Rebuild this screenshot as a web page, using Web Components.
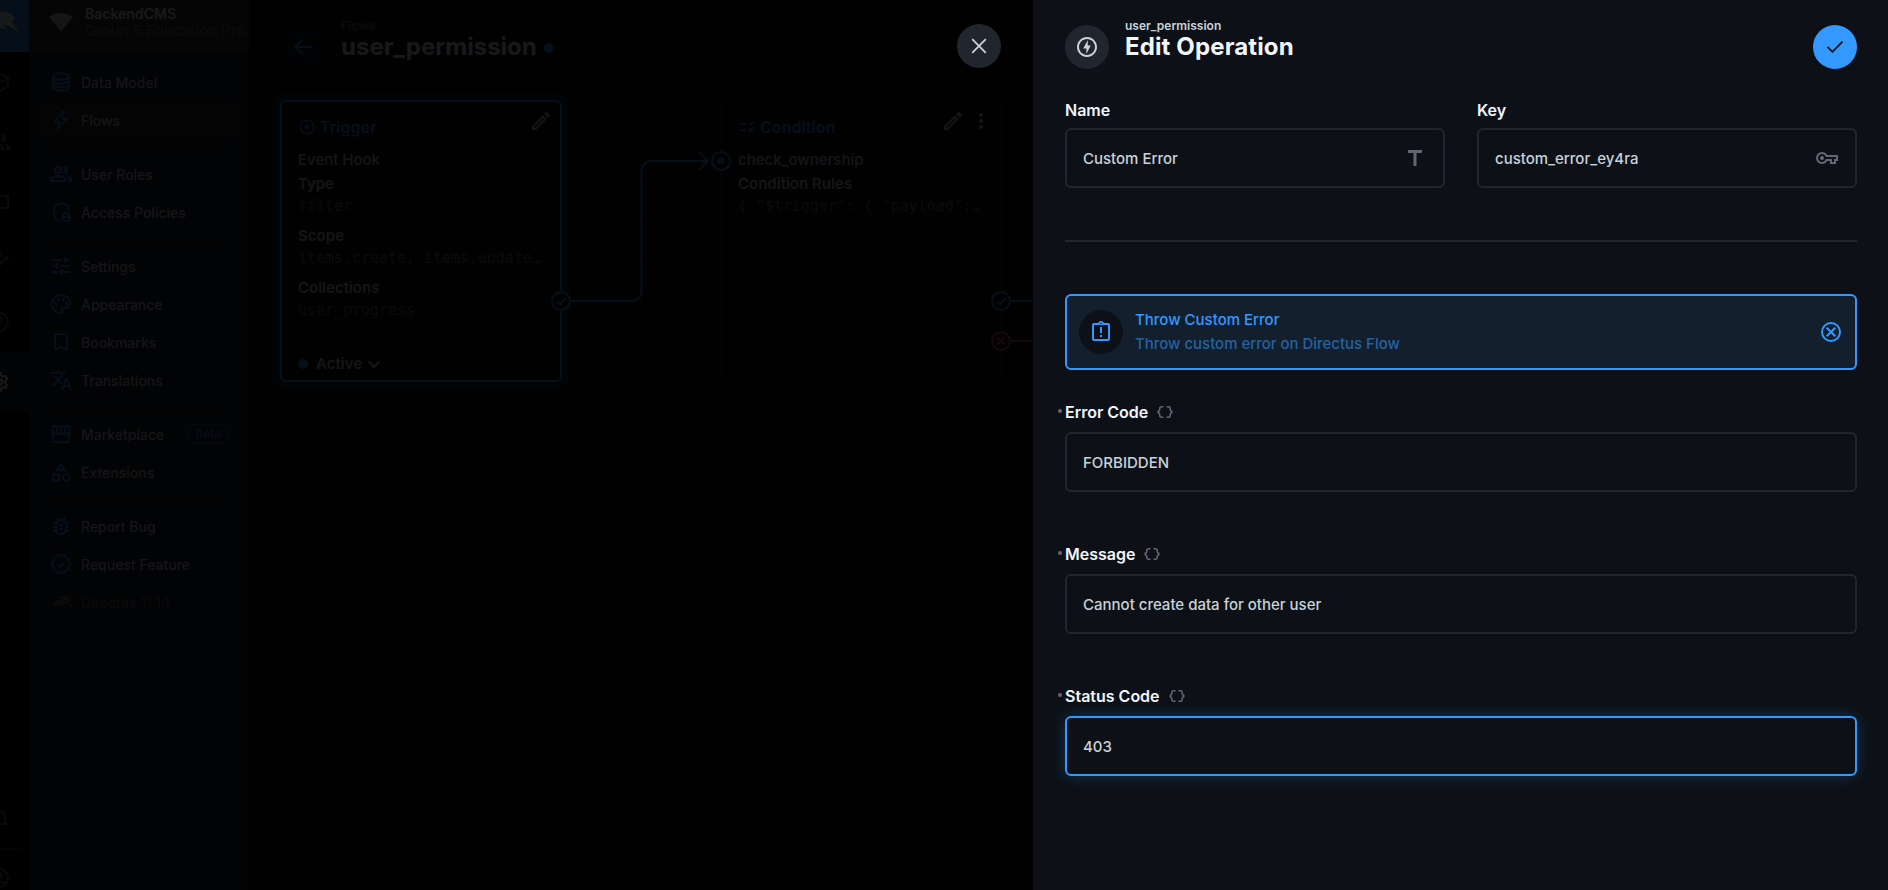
<!DOCTYPE html>
<html lang="en">
<head>
<meta charset="utf-8">
<title>Edit Operation</title>
<style>
html,body{margin:0;height:100%;overflow:hidden;background:#0d1117}
body{font-family:Inter,sans-serif;
--bg:#0d1117;--line:#21262e;--fg:#c9d1d9;--accent:#f0f6fc;--muted:#666672;--primary:#3399ff;--danger:#e35169;
color:var(--fg);font-size:15px;font-weight:500;line-height:24px}
</style>
</head>
<body>
<cms-app></cms-app>
<script>
const P = d => `<path d="${d}"/>`;
const S = (d, w = 2) => `<path d="${d}" fill="none" stroke="currentColor" stroke-width="${w}"/>`;
const HARE = P('M0 18.500c2.500-.5 3.500-2 4-4 .7-3 3-4.800 6.500-4.500l3 .6C12.800 9 11.500 8 10 7.500c1.800-2 4.800-2.600 7.500-1.500 2.300.9 4 2.200 4.300 3.800.1 1-1 1.500-2.300 1.700 1.500 1.500 2.700 3 4.300 5.500l-.8.9-4.800-3.600-3.500-.4c.5 1.400 1.500 1.600 2.300 2.200-2.600.6-4.600-.3-5.800-1.500-2.100.9-3.900.6-5.500.1-1.300 1.700-3 1.600-4 2.400z');
const ICONS = {
  hare: HARE,
  fan: P('M12 21.500 24 7C22 5.300 17.800 3 12 3S2 5.300 0 7z'),
  database: `<ellipse cx="12" cy="6.500" rx="8" ry="3.200" fill="none" stroke="currentColor" stroke-width="2"/>` + S('M4 6.500v11c0 1.800 3.600 3.200 8 3.200s8-1.400 8-3.200v-11M4 10.200c0 1.800 3.600 3.200 8 3.200s8-1.400 8-3.200M4 14c0 1.800 3.600 3.200 8 3.200s8-1.400 8-3.200'),
  bolt: S('M13.800 3.500 5.500 14H10l-1.200 7 9-10.600h-4.300l1.300-6.900z', 1.8),
  group: P('M16.670 13.130C18.040 14.060 19 15.320 19 17v3h4v-3c0-2.180-3.570-3.470-6.330-3.870zM15 12c2.210 0 4-1.790 4-4s-1.790-4-4-4c-.47 0-.91.1-1.330.24C14.500 5.270 15 6.580 15 8s-.5 2.730-1.330 3.760c.42.14.86.24 1.330.24zM9 12c2.210 0 4-1.790 4-4s-1.790-4-4-4-4 1.790-4 4 1.790 4 4 4zm0-6c1.100 0 2 .9 2 2s-.9 2-2 2-2-.9-2-2 .9-2 2-2zm0 7c-2.670 0-8 1.340-8 4v3h16v-3c0-2.660-5.330-4-8-4zm6 5H3v-.99C3.200 16.290 6.300 15 9 15s5.800 1.290 6 2v1z'),
  admin: S('M11.500 21C7.500 19.800 5 15.800 5 11.200V5.600L12 3l7 2.600v5') + `<path fill-rule="evenodd" d="M17 12a5 5 0 1 0 0 10 5 5 0 0 0 0-10zm0 1.700a1.500 1.500 0 1 1 0 3 1.500 1.500 0 0 1 0-3zm0 6.500c-1.100 0-2-.5-2.600-1.300.4-.8 1.700-1.200 2.600-1.200s2.200.4 2.600 1.200c-.6.8-1.500 1.300-2.600 1.300z"/>`,
  tune: P('M3 17v2h6v-2H3zM3 5v2h10V5H3zm10 16v-2h8v-2h-8v-2h-2v6h2zM7 9v2H3v2h4v2h2V9H7zm14 4v-2H11v2h10zm-6-4h2V7h4V5h-4V3h-2v6z'),
  palette: P('M12 22C6.490 22 2 17.510 2 12S6.490 2 12 2s10 4.040 10 9c0 3.310-2.690 6-6 6h-1.770c-.28 0-.5.22-.5.5 0 .12.05.23.13.33.41.47.64 1.060.64 1.670A2.500 2.500 0 0 1 12 22zm0-18c-4.410 0-8 3.590-8 8s3.590 8 8 8c.28 0 .5-.22.5-.5a.54.54 0 0 0-.14-.35c-.41-.46-.63-1.050-.63-1.650a2.500 2.500 0 0 1 2.500-2.500H16c2.210 0 4-1.790 4-4 0-3.860-3.590-7-8-7z') + '<circle cx="6.500" cy="11.500" r="1.500"/><circle cx="9.500" cy="7.500" r="1.500"/><circle cx="14.500" cy="7.500" r="1.500"/><circle cx="17.500" cy="11.500" r="1.500"/>',
  bookmark: P('M17 3H7c-1.100 0-2 .9-2 2v16l7-3 7 3V5c0-1.100-.9-2-2-2zm0 15-5-2.180L7 18V5h10v13z'),
  translate: P('M12.870 15.070l-2.540-2.510.03-.03c1.740-1.940 2.980-4.170 3.710-6.530H17V4h-7V2H8v2H1v1.990h11.170C11.500 7.920 10.440 9.750 9 11.350 8.070 10.320 7.300 9.190 6.690 8h-2c.73 1.630 1.730 3.170 2.980 4.560l-5.090 5.020L4 19l5-5 3.110 3.110.76-2.040zM18.500 10h-2L12 22h2l1.120-3h4.750L21 22h2l-4.500-12zm-2.620 7l1.620-4.330L19.120 17h-3.240z'),
  store: S('M4 11v9h16v-9M4.300 4h15.400l1.300 5.500c0 1.700-1 2.500-2.300 2.500S16.400 11 16.400 9.500c0 1.500-.9 2.500-2.200 2.500S12 11 12 9.500C12 11 11.100 12 9.800 12S7.600 11 7.600 9.500C7.600 11 6.600 12 5.300 12S3 11.200 3 9.500zM7.600 9.500 8 4M12 9.500V4M16.400 9.500 16 4'),
  category: P('M12 2l-5.500 9h11L12 2zm0 3.840L13.930 9h-3.870L12 5.840zM17.500 13a4.500 4.500 0 1 0 0 9 4.500 4.500 0 0 0 0-9zm0 7a2.500 2.500 0 0 1 0-5 2.500 2.500 0 0 1 0 5zM3 21.500h8v-8H3v8zm2-6h4v4H5v-4z'),
  bug: P('M20 8h-2.810c-.45-.78-1.070-1.450-1.820-1.960L17 4.410 15.590 3l-2.170 2.170C12.960 5.060 12.490 5 12 5s-.96.06-1.410.17L8.410 3 7 4.410l1.620 1.630C7.880 6.550 7.260 7.220 6.810 8H4v2h2.090c-.05.33-.09.66-.09 1v1H4v2h2v1c0 .34.04.67.09 1H4v2h2.810c1.040 1.790 2.970 3 5.190 3s4.150-1.210 5.190-3H20v-2h-2.090c.05-.33.09-.66.09-1v-1h2v-2h-2v-1c0-.34-.04-.67-.09-1H20V8zm-4 7c0 2.210-1.790 4-4 4s-4-1.790-4-4v-4c0-2.210 1.790-4 4-4s4 1.790 4 4v4zm-6-1h4v2h-4v-2zm0-4h4v2h-4v-2z'),
  verified: S('M21.700 12l-2.200-2.500.3-3.300-3.200-.7-1.700-2.800L12 4 9.100 2.700 7.400 5.500l-3.200.7.3 3.300L2.300 12l2.200 2.500-.3 3.300 3.200.7 1.700 2.800L12 20l2.900 1.300 1.700-2.800 3.200-.7-.3-3.300z', 1.9) + S('m8.200 12.200 2.700 2.700 5-5'),
  edit: P('M14.060 9.020l.92.92L5.920 19H5v-.92l9.060-9.060M17.660 3c-.25 0-.51.1-.7.29l-1.830 1.830 3.750 3.750 1.830-1.830c.39-.39.39-1.020 0-1.410l-2.340-2.340c-.2-.2-.45-.29-.71-.29zm-3.600 3.190L3 17.250V21h3.750L17.810 9.940l-3.750-3.750z'),
  more: '<circle cx="12" cy="6" r="2"/><circle cx="12" cy="12" r="2"/><circle cx="12" cy="18" r="2"/>',
  offline: P('M12 2.020c-5.510 0-9.980 4.470-9.980 9.980s4.470 9.980 9.980 9.980 9.980-4.470 9.980-9.980S17.510 2.020 12 2.020zm0 17.960c-4.400 0-7.980-3.580-7.980-7.980S7.600 4.020 12 4.020 19.980 7.600 19.980 12 16.400 19.980 12 19.980zM12.750 5l-4.500 8.500h3.140V19l4.360-8.500h-3z'),
  rule: P('M16.540 11 13 7.460l1.410-1.410 2.120 2.120 4.240-4.240 1.410 1.410L16.540 11zM11 7H2v2h9V7zm10 6.410L19.590 12 17 14.590 14.410 12 13 13.410 15.590 16 13 18.590 14.410 20 17 17.410 19.590 20 21 18.590 18.410 16 21 13.410zM11 15H2v2h9v-2z'),
  key: P('M7 14q-.825 0-1.412-.588T5 12t.588-1.412T7 10t1.413.588T9 12t-.587 1.413T7 14m0 4q-2.500 0-4.250-1.750T1 12t1.750-4.250T7 6q1.675 0 3.038.825T12.200 9H23v6h-2v3h-6v-3h-2.800q-.8 1.350-2.162 2.175T7 18m0-2q1.650 0 2.650-1.012T10.850 13H17v3h2v-3h2v-2H10.850q-.2-.975-1.200-1.988T7 8T4.175 9.175T3 12t1.175 2.825T7 16'),
  title: P('M5 4v3h5.500v13h3V7H19V4z'),
  late: `<path fill-rule="evenodd" d="M19 3h-4.180C14.400 1.840 13.300 1 12 1s-2.400.84-2.820 2H5c-1.100 0-2 .9-2 2v14c0 1.100.9 2 2 2h14c1.100 0 2-.9 2-2V5c0-1.100-.9-2-2-2zm0 16H5V5h14v14zM12 2.700a.8.8 0 1 0 0 1.600.8.8 0 0 0 0-1.600z"/>` + P('M11 15h2v2h-2zM11 7h2v6h-2z'),
  cancel: '<circle cx="12" cy="12" r="9" fill="none" stroke="currentColor" stroke-width="2"/>' + S('m7.700 7.700 8.600 8.600M16.300 7.700l-8.600 8.600'),
  object: P('M4 7v2c0 .55-.45 1-1 1H2v4h1c.55 0 1 .45 1 1v2c0 1.650 1.350 3 3 3h3v-2H7c-.55 0-1-.45-1-1v-2c0-1.300-.84-2.420-2-2.830v-.34C5.160 11.420 6 10.300 6 9V7c0-.55.45-1 1-1h3V4H7C5.350 4 4 5.350 4 7zm17 3c-.55 0-1-.45-1-1V7c0-1.650-1.350-3-3-3h-3v2h3c.55 0 1 .45 1 1v2c0 1.300.84 2.420 2 2.830v.34c-1.160.41-2 1.520-2 2.830v2c0 .55-.45 1-1 1h-3v2h3c1.650 0 3-1.350 3-3v-2c0-.55.45-1 1-1h1v-4h-1z'),
  check: S('m4.500 11.800 5 5L19.500 6.600', 1.7),
  close: S('m5.200 5.200 13.600 13.600M18.800 5.200 5.200 18.800', 1.8),
  back: S('M20 12H4.600M12 4.300 4.400 12l7.600 7.700', 1.9),
  chevron: S('m6 9 6 6 6-6', 2.6),
  cube: S('m12 3 9 5v8.500l-9 5-9-5V8zM3 8l9 5 9-5M12 13v8'),
  folder: S('M3 6h18v12H3z'),
  insights: S('m2 18 6-7 4 4 8-8') + '<circle cx="12" cy="15" r="2"/><circle cx="20" cy="8" r="2"/><circle cx="13" cy="5" r="1.500"/>',
  help: '<circle cx="12" cy="12" r="9" fill="none" stroke="currentColor" stroke-width="2"/>' + S('M9 10a3 3 0 1 1 4.700 2.500c-1.200.8-1.700 1.300-1.700 2.500M12 16.500v2'),
  gear: '<circle cx="12" cy="12" r="3" fill="none" stroke="currentColor" stroke-width="2"/>' + S('M10.200 3h3.600l.4 2.700 1.700 1 2.500-1 1.800 3.100-2.100 1.700v2.900l2.100 1.800-1.800 3.100-2.500-1-1.700 1-.4 2.700h-3.600l-.4-2.700-1.700-1-2.500 1-1.800-3.100 2.100-1.700v-3L3.800 8.800l1.800-3.100 2.500 1 1.700-1z'),
  bell: S('M4 18h16M6 18v-7a6 6 0 0 1 12 0v7') + P('M10 20h4a2 2 0 0 1-4 0zM10.500 3.500h3V6h-3z'),
  account: '<circle cx="12" cy="12" r="9" fill="none" stroke="currentColor" stroke-width="2"/><circle cx="12" cy="9.500" r="2.600" fill="none" stroke="currentColor" stroke-width="2"/>' + S('M5.500 18.500c1.800-1.700 4-2.500 6.500-2.500s4.700.8 6.500 2.500')
};

function define(name, render) {
  customElements.define(name, class extends HTMLElement {
    constructor() { super(); this.attachShadow({ mode: 'open' }); }
    connectedCallback() {
      const t = document.createElement('template');
      t.innerHTML = render(this);
      this.shadowRoot.replaceChildren(t.content.cloneNode(true));
    }
  });
}
const at = (el, n, d = '') => el.getAttribute(n) ?? d;

define('m-icon', el => `<style>
:host{display:block;flex:none;width:${at(el, 'size', 24)}px;height:${at(el, 'size', 24)}px}
svg{display:block;width:100%;height:100%;overflow:visible}</style>
<svg viewBox="0 0 24 24" fill="currentColor">${ICONS[at(el, 'name')]}</svg>`);

define('round-button', () => `<style>
:host{display:flex;flex:none;width:44px;height:44px;border-radius:50%;align-items:center;justify-content:center;background:var(--button-bg,#21262e)}
</style><slot></slot>`);

define('module-rail', () => `<style>
:host{display:flex;flex:none;flex-direction:column;width:60px;height:100%;background:#000;color:#65656d}
div{display:flex;align-items:center;justify-content:center;height:60px;flex:none}
.logo{color:#fff;background:#2a96ff}
.on{background:#1a212e;color:#f0f6fc}
.gap{flex:1}
hr{width:44px;margin:0 8px -2px;box-sizing:border-box;border:0;height:2px;background:#21262e}
</style>
<div class="logo"><m-icon name="hare" size="38"></m-icon></div>
<div><m-icon name="cube"></m-icon></div>
<div><m-icon name="group"></m-icon></div>
<div><m-icon name="folder"></m-icon></div>
<div><m-icon name="insights"></m-icon></div>
<div><m-icon name="help"></m-icon></div>
<div class="on"><m-icon name="gear"></m-icon></div>
<span class="gap"></span>
<div><m-icon name="bell"></m-icon></div>
<hr>
<div><m-icon name="account"></m-icon></div>`);

define('nav-item', el => `<style>
:host{display:flex;align-items:center;gap:8px;height:36px;margin-bottom:2px;padding:0 8px;border-radius:6px;font-size:14px;color:var(--fg)}
:host([active]){background:#2c2c2c}
:host([muted]){color:#606069}
m-icon{color:var(--primary)}
:host([muted]) m-icon{color:#65656d}
span{flex:1;padding-top:1px}
</style><m-icon name="${at(el, 'icon')}"></m-icon><span><slot></slot></span><slot name="badge"></slot>`);

define('nav-divider', () => `<style>:host{display:flex;align-items:center;height:16px;padding:0 8px}
i{flex:1;height:2px;background:#21262e}</style><i></i>`);

define('side-nav', () => `<style>
:host{display:flex;flex:none;flex-direction:column;width:220px;height:100%;background:#1a212e}
header{display:flex;align-items:center;gap:12px;height:60px;padding:0 0 0 20px;background:#323232;box-sizing:border-box}
header div{min-width:0;font-size:14px;line-height:17px}
b{display:block;font-weight:600;color:var(--accent)}
p{margin:0;white-space:nowrap;font-size:15px;letter-spacing:-.05px;color:#666672}
nav{padding:12px 11px 0 12px}
em{font-style:normal;font-size:12px;line-height:16px;padding:0 6px;margin-right:1px;border:2px solid #1a4a80;border-radius:6px;color:#3080e0}
</style>
<header><m-icon name="fan"></m-icon><div><b>BackendCMS</b><p>Group 5 Education Pro…</p></div></header>
<nav>
<nav-item icon="database">Data Model</nav-item>
<nav-item icon="bolt" active>Flows</nav-item>
<nav-divider></nav-divider>
<nav-item icon="group">User Roles</nav-item>
<nav-item icon="admin">Access Policies</nav-item>
<nav-divider></nav-divider>
<nav-item icon="tune">Settings</nav-item>
<nav-item icon="palette">Appearance</nav-item>
<nav-item icon="bookmark">Bookmarks</nav-item>
<nav-item icon="translate">Translations</nav-item>
<nav-divider></nav-divider>
<nav-item icon="store">Marketplace<em slot="badge">Beta</em></nav-item>
<nav-item icon="category">Extensions</nav-item>
<nav-divider></nav-divider>
<nav-item icon="bug">Report Bug</nav-item>
<nav-item icon="verified">Request Feature</nav-item>
<nav-item icon="hare" muted>Directus 11.1.1</nav-item>
</nav>`);

define('page-title', el => `<style>
:host{display:flex;align-items:flex-start;gap:16px}
div{margin-top:-6px}
small{display:block;font-size:12px;line-height:14px;font-weight:600;color:var(--small,var(--fg))}
h1{margin:0;font-size:24px;line-height:28px;font-weight:700;letter-spacing:var(--title-spacing,.13px);color:var(--accent);display:flex;align-items:center;gap:7px}
</style><slot name="icon"></slot><div><small>${at(el, 'parent')}</small><h1><slot></slot></h1></div>`);

define('flow-panel', el => `<style>
:host{position:absolute;box-sizing:border-box;width:282px;height:282px;border:2px solid #21262e;border-radius:6px;background:var(--bg);padding:13px 16px 0;display:flex;flex-direction:column}
:host([trigger]){border-color:var(--primary);box-shadow:0 0 0 7px #0d2a48}
header{display:flex;height:24px;align-items:flex-start;color:var(--primary);margin-right:-9px;margin-bottom:9px}
header m-icon[size]{margin:3px 4px 0 0}
h2{flex:1;margin:0;font-size:16px;line-height:24px;font-weight:600;letter-spacing:.05px}
nav{display:flex;gap:4px;margin-top:-6px;color:#c9d1d9}
</style>
<header><m-icon name="${at(el, 'icon')}" size="18"></m-icon><h2>${at(el, 'heading')}</h2>
<nav><m-icon name="edit"></m-icon>${el.hasAttribute('trigger') ? '' : '<m-icon name="more"></m-icon>'}</nav></header>
<slot></slot>`);

define('flow-field', el => `<style>
:host{display:block;margin-bottom:8px}
b{display:block;font-weight:600;line-height:24px}
code{display:block;font:15px/20px "DejaVu Sans Mono",monospace;letter-spacing:-.04px;color:#666672;white-space:nowrap;overflow:hidden;text-overflow:ellipsis}
</style><b>${at(el, 'label')}</b><code><slot></slot></code>`);

define('flow-status', () => `<style>
:host{display:flex;align-items:center;gap:8px;height:36px;margin:auto -10px 0;padding:2px 10px 0;box-sizing:border-box;border-top:2px solid #171b21;font-weight:600}
i{width:10px;height:10px;border-radius:50%;background:var(--primary)}
m-icon{margin-left:-7px}
</style><i></i><slot></slot><m-icon name="chevron" size="22"></m-icon>`);

define('flow-canvas', () => `<style>
:host{display:block;position:relative;flex:1;background:radial-gradient(circle at 1px 1px,#2a3038 1px,transparent 1.300px) 0 0/20px 20px}
svg{position:absolute;left:0;top:0;width:760px;height:300px;overflow:visible}
</style>
<flow-panel trigger icon="offline" heading="Trigger" style="left:0;top:0"><span>Event Hook</span>
<flow-field label="Type">filter</flow-field>
<flow-field label="Scope">items.create, items.update, items.delete</flow-field>
<flow-field label="Collections">user_progress</flow-field>
<flow-status>Active</flow-status></flow-panel>
<flow-panel icon="rule" heading="Condition" style="left:440px;top:0"><span>check_ownership</span>
<flow-field label="Condition Rules">{ "$trigger": { "payload": { "user": true } } }</flow-field></flow-panel>
<svg fill="none" stroke="#3399ff" stroke-width="2">
<path d="M291 201h60.500a10 10 0 0 0 10-10V71a10 10 0 0 1 10-10h56M419 52l9 9-9 9"/>
<circle cx="281" cy="201" r="9" fill="#0d1117"/><path d="m276.500 201 3.500 3.500 6-6"/>
<circle cx="441" cy="61" r="9" fill="#0d1117"/><circle cx="441" cy="61" r="3.300" fill="#3399ff" stroke="none"/>
<circle cx="721" cy="201" r="9" fill="#0d1117"/><path d="m716.500 201 3.500 3.500 6-6M731 201h40"/>
<g stroke="#e35169"><circle cx="721" cy="241" r="9" fill="#0d1117"/><path d="m717 237 8 8m0-8-8 8M731 241h40"/></g>
</svg>`);

define('flow-page', () => `<style>
:host{display:flex;flex:1;flex-direction:column;padding:33px 0 0 31px;min-width:0;background:var(--bg)}
page-title{height:44px;margin-bottom:31px;--small:#666672;--title-spacing:.02px}
round-button{--button-bg:#121b2a;color:var(--primary);margin-left:1px}
i{width:10px;height:10px;border-radius:50%;background:var(--primary);margin-top:1px}
</style>
<page-title parent="Flows"><round-button slot="icon"><m-icon name="back" size="24"></m-icon></round-button><span>user_permission</span><i></i></page-title>
<flow-canvas></flow-canvas>`);

define('form-field', el => `<style>
:host{display:block}
label{display:flex;align-items:center;height:24px;margin-bottom:${el.hasAttribute('required') ? 8 : 6}px;font-size:16px;font-weight:600;color:var(--accent)}
label i{width:4px;height:4px;border-radius:50%;background:var(--muted);margin:-3px 3px 0 -7px}
label m-icon{margin-left:8px;color:var(--muted)}
div{display:flex;align-items:center;box-sizing:border-box;height:60px;padding:0 16px;border:2px solid var(--line);border-radius:6px;color:var(--fg)}
:host([focused]) div{border-color:var(--primary);box-shadow:0 0 16px -2px #3399ff55}
span{flex:1;padding-top:2px}
div m-icon{color:var(--muted)}
</style>
<label>${el.hasAttribute('required') ? '<i></i>' : ''}${at(el, 'label')}${el.hasAttribute('required') ? '<m-icon name="object" size="18"></m-icon>' : ''}</label>
<div><span><slot></slot></span>${at(el, 'icon') ? `<m-icon name="${at(el, 'icon')}"></m-icon>` : ''}</div>`);

define('operation-card', () => `<style>
:host{display:flex;align-items:center;gap:12px;box-sizing:border-box;height:76px;padding:0 12px;border:2px solid var(--primary);border-radius:6px;background:#131f2d;color:var(--primary)}
round-button{--button-bg:#0d1117}
div{flex:1}
p{margin:0;color:#2562a0;letter-spacing:-.02px}
</style><round-button><m-icon name="late"></m-icon></round-button>
<div><slot></slot><p><slot name="description"></slot></p></div><m-icon name="cancel"></m-icon>`);

define('side-drawer', () => `<style>
:host{display:block;position:absolute;left:1033px;top:0;bottom:0;width:856px;box-sizing:border-box;padding:25px 32px 0;background:var(--bg)}
.close{position:absolute;left:-76px;top:24px}
header{display:flex;justify-content:space-between;height:44px;margin-bottom:29px}
.save{--button-bg:#3399ff;color:#0d1117}
.pair{display:grid;grid-template-columns:1fr 1fr;gap:32px}
hr{height:2px;border:0;margin:52px 0;background:var(--line)}
.fields{display:grid;gap:50px;margin-top:30px}
</style>
<round-button class="close"><m-icon name="close"></m-icon></round-button>
<header><page-title parent="user_permission"><round-button slot="icon"><m-icon name="offline"></m-icon></round-button>Edit Operation</page-title>
<round-button class="save"><m-icon name="check"></m-icon></round-button></header>
<div class="pair"><form-field label="Name" icon="title">Custom Error</form-field><form-field label="Key" icon="key">custom_error_ey4ra</form-field></div>
<hr>
<operation-card>Throw Custom Error<span slot="description">Throw custom error on Directus Flow</span></operation-card>
<div class="fields">
<form-field required label="Error Code">FORBIDDEN</form-field>
<form-field required label="Message">Cannot create data for other user</form-field>
<form-field required focused label="Status Code">403</form-field>
</div>`);

define('cms-app', () => `<style>
:host{display:block;position:relative;height:100vh;overflow:hidden}
main{display:flex;height:calc(100% + 26px);margin:-8px 0 0 -31px}
.overlay{position:absolute;inset:0;background:rgba(0,0,0,.9)}
</style>
<main><module-rail></module-rail><side-nav></side-nav><flow-page></flow-page></main>
<div class="overlay"></div>
<side-drawer></side-drawer>`);
</script>
</body>
</html>
